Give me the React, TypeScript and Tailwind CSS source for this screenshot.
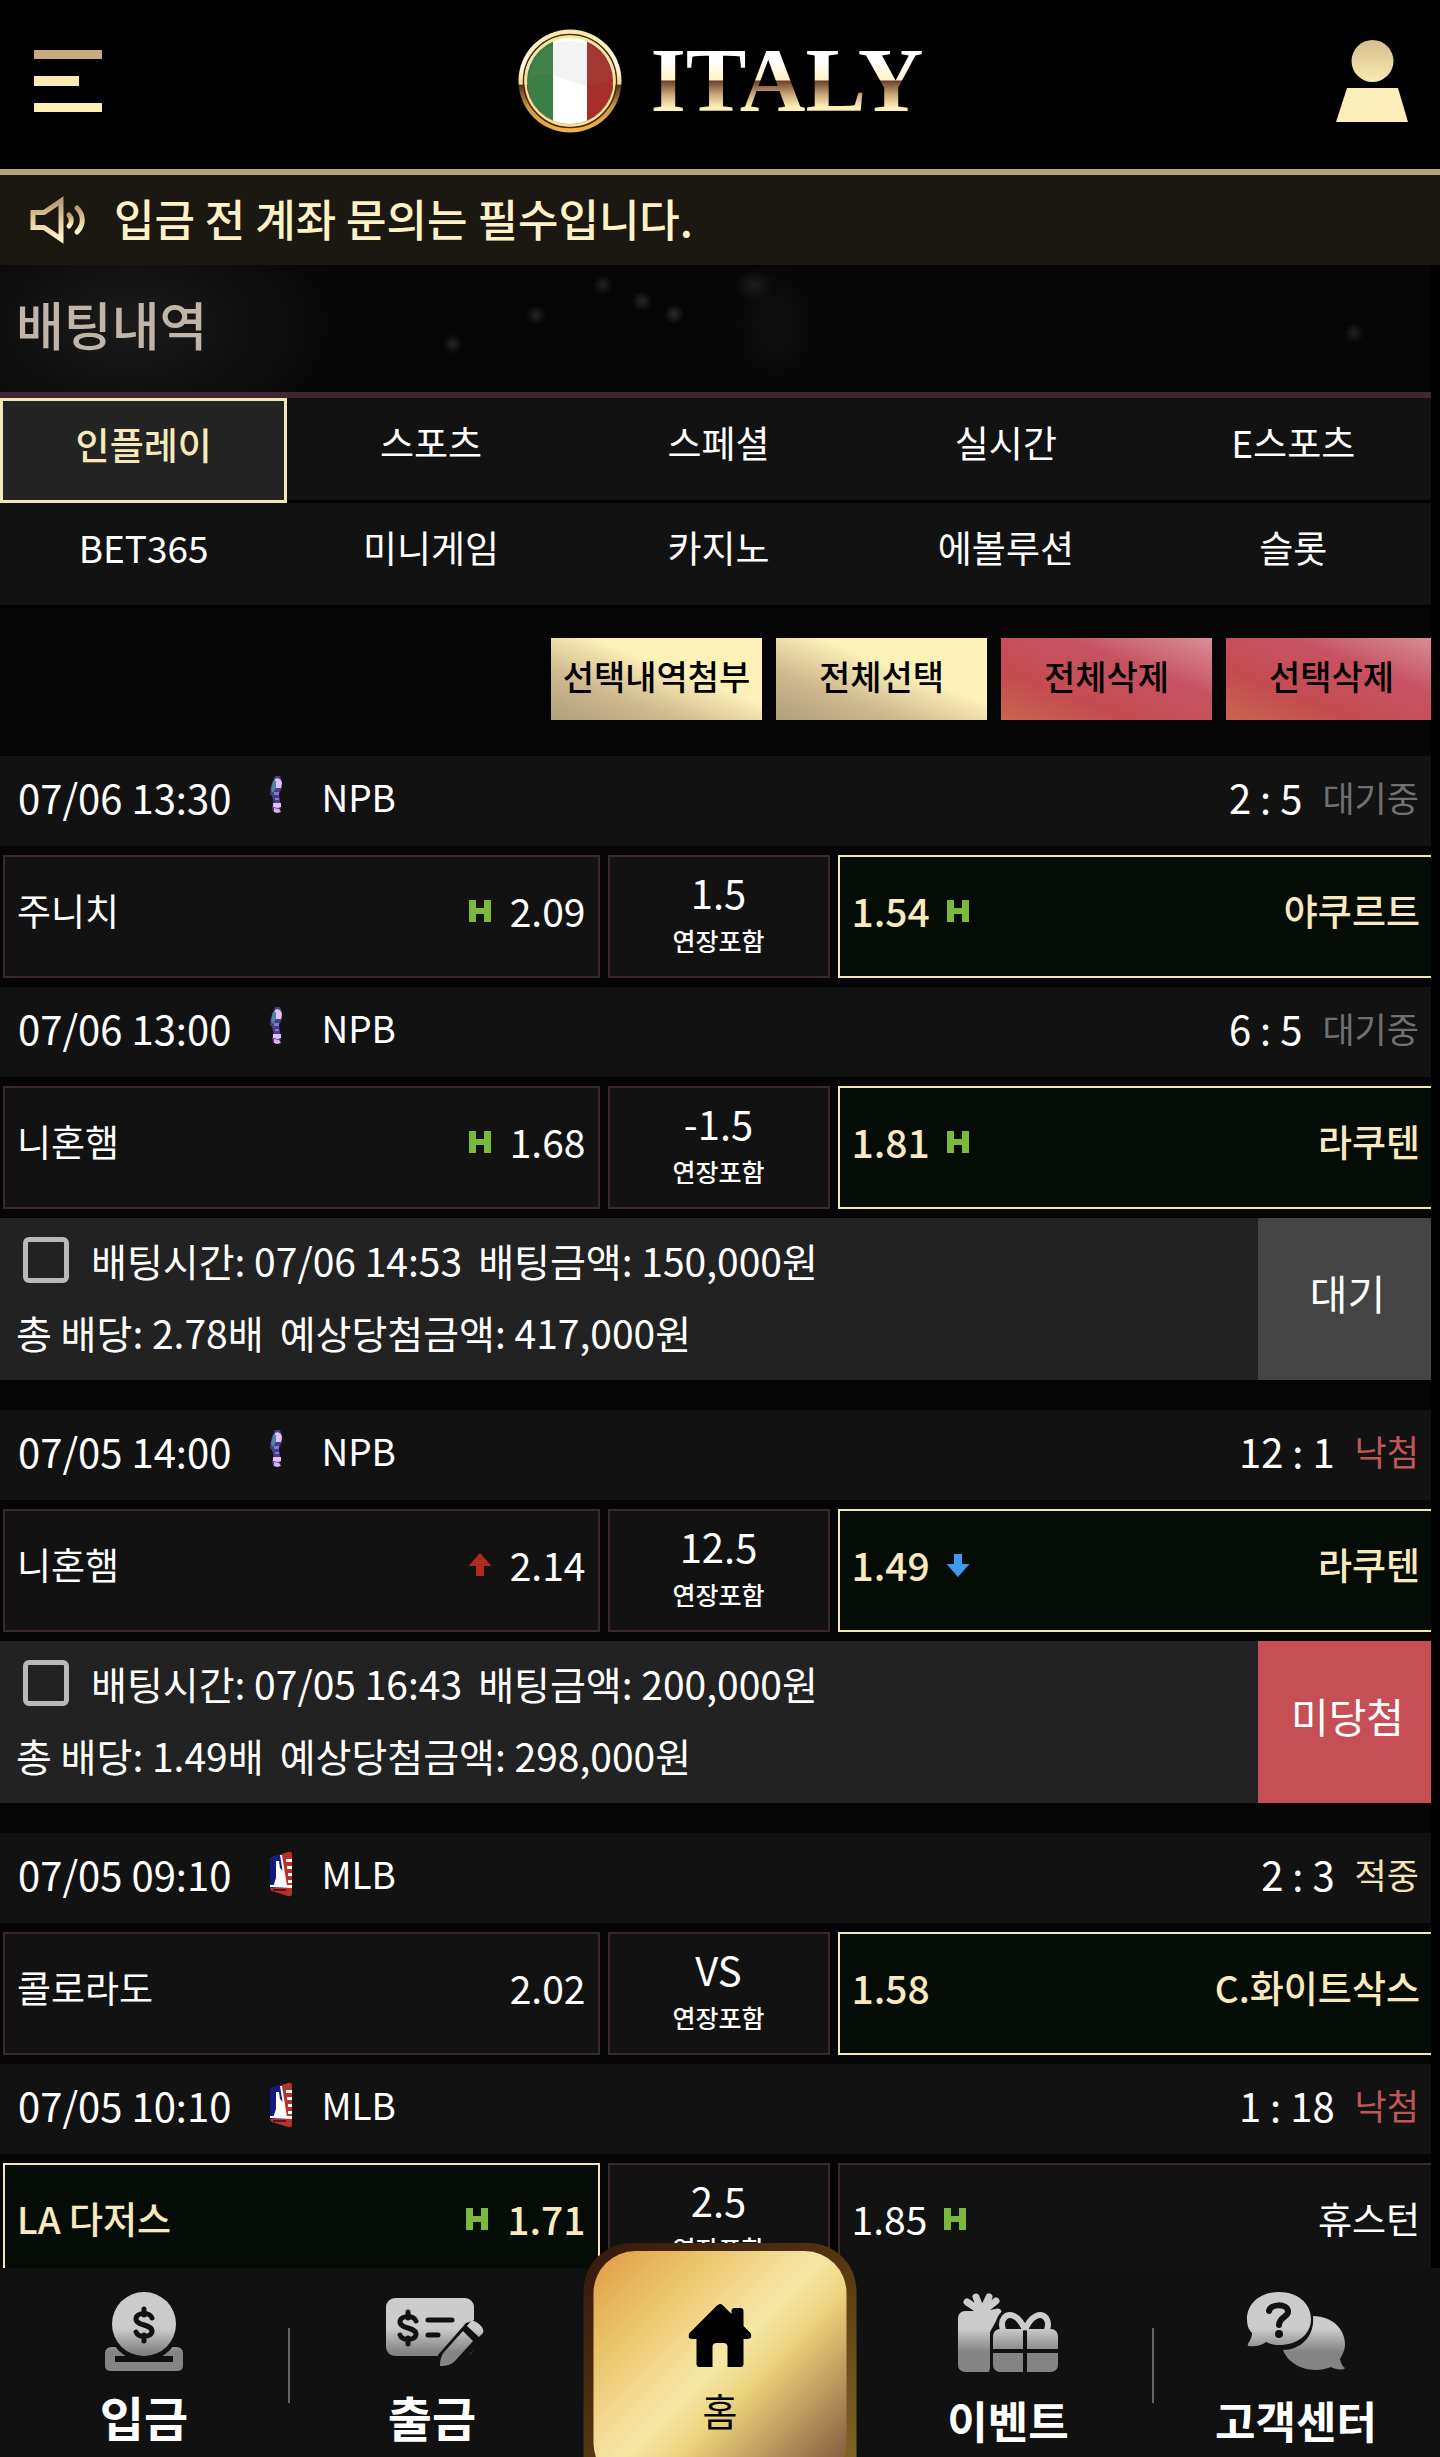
import { ReactNode } from 'react';
import clsx from 'clsx';

type Move = 'H' | 'up' | 'down' | null;
type Status = 'wait' | 'lose' | 'win';

interface Match {
    id: number;
    time: string;
    league: 'NPB' | 'MLB';
    score: string;
    status: Status;
    home: string;
    homeOdds: string;
    homeMove: Move;
    line: string;
    away: string;
    awayOdds: string;
    awayMove: Move;
    pick: 'home' | 'away';
}

interface Bet {
    id: number;
    matches: Match[];
    summary?: {
        time: string;
        amount: string;
        odds: string;
        expected: string;
        result: string;
        lost: boolean;
    };
}

const TABS = ['인플레이', '스포츠', '스페셜', '실시간', 'E스포츠', 'BET365', '미니게임', '카지노', '에볼루션', '슬롯'];

const ACTIONS = [
    { label: '선택내역첨부', danger: false },
    { label: '전체선택', danger: false },
    { label: '전체삭제', danger: true },
    { label: '선택삭제', danger: true },
];

const STATUS: Record<Status, { label: string; color: string }> = {
    wait: { label: '대기중', color: 'text-[#707070]' },
    lose: { label: '낙첨', color: 'text-[#c0565a]' },
    win: { label: '적중', color: 'text-[#f5e3b4]' },
};

const BETS: Bet[] = [
    {
        id: 1,
        matches: [
            { id: 11, time: '07/06 13:30', league: 'NPB', score: '2 : 5', status: 'wait', home: '주니치', homeOdds: '2.09', homeMove: 'H', line: '1.5', away: '야쿠르트', awayOdds: '1.54', awayMove: 'H', pick: 'away' },
            { id: 12, time: '07/06 13:00', league: 'NPB', score: '6 : 5', status: 'wait', home: '니혼햄', homeOdds: '1.68', homeMove: 'H', line: '-1.5', away: '라쿠텐', awayOdds: '1.81', awayMove: 'H', pick: 'away' },
        ],
        summary: { time: '07/06 14:53', amount: '150,000원', odds: '2.78배', expected: '417,000원', result: '대기', lost: false },
    },
    {
        id: 2,
        matches: [
            { id: 21, time: '07/05 14:00', league: 'NPB', score: '12 : 1', status: 'lose', home: '니혼햄', homeOdds: '2.14', homeMove: 'up', line: '12.5', away: '라쿠텐', awayOdds: '1.49', awayMove: 'down', pick: 'away' },
        ],
        summary: { time: '07/05 16:43', amount: '200,000원', odds: '1.49배', expected: '298,000원', result: '미당첨', lost: true },
    },
    {
        id: 3,
        matches: [
            { id: 31, time: '07/05 09:10', league: 'MLB', score: '2 : 3', status: 'win', home: '콜로라도', homeOdds: '2.02', homeMove: null, line: 'VS', away: 'C.화이트삭스', awayOdds: '1.58', awayMove: null, pick: 'away' },
            { id: 32, time: '07/05 10:10', league: 'MLB', score: '1 : 18', status: 'lose', home: 'LA 다저스', homeOdds: '1.71', homeMove: 'H', line: '2.5', away: '휴스턴', awayOdds: '1.85', awayMove: 'H', pick: 'home' },
        ],
    },
];

function FlagLogo() {
    return (
        <svg viewBox="0 0 104 104" className="size-[104px]">
            <defs>
                <linearGradient id="ring" x1="0" y1="0" x2="0" y2="1">
                    <stop offset="0" stopColor="#fbe9a4" />
                    <stop offset="0.35" stopColor="#fffbe6" />
                    <stop offset="0.53" stopColor="#f3d98a" />
                    <stop offset="0.54" stopColor="#5c3317" />
                    <stop offset="0.75" stopColor="#c99745" />
                    <stop offset="1" stopColor="#f4b548" />
                </linearGradient>
                <clipPath id="flag">
                    <circle cx="52" cy="52" r="43" />
                </clipPath>
            </defs>
            <circle cx="52" cy="52" r="51.5" fill="url(#ring)" />
            <circle cx="52" cy="52" r="46.5" fill="none" stroke="#4a2a12" strokeWidth="1.5" />
            <circle cx="52" cy="52" r="44.5" fill="none" stroke="#fbe2a0" strokeWidth="2" />
            <g clipPath="url(#flag)">
                <path d="M8 8h27v88H8z" fill="#3a7f46" />
                <path d="M35 8h34v88H35z" fill="#ffffff" />
                <path d="M69 8h28v88H69z" fill="#a62e2b" />
                <path d="M12 52C20 40 38 46 52 52c14 6 28 6 42-2C92 26 74 12 52 12S12 30 12 52z" fill="#888" opacity="0.1" />
            </g>
        </svg>
    );
}

function SpeakerIcon() {
    return (
        <svg viewBox="0 0 56 48" className="h-12 w-14">
            <defs>
                <linearGradient id="speaker" x1="0" y1="0" x2="0" y2="1">
                    <stop offset="0" stopColor="#b99b78" />
                    <stop offset="0.55" stopColor="#e6d09c" />
                    <stop offset="1" stopColor="#fff6cc" />
                </linearGradient>
            </defs>
            <g fill="none" stroke="url(#speaker)" strokeWidth="5">
                <path d="M3 16.500h11L31 5v38L14 31.500H3z" />
                <path d="M39 19c3 3 3 8 0 11" strokeLinecap="round" />
                <path d="M47 12c7 7 7 17 0 24" strokeLinecap="round" />
            </g>
        </svg>
    );
}

function MoveIcon({ move }: { move: Move }) {
    if (!move) return null;
    return (
        <svg viewBox="0 0 24 24" className="size-6 shrink-0">
            {move === 'H' && <path d="M1 1h7v8h8V1h7v22h-7v-8H8v8H1z" fill="#7ab93c" />}
            {move === 'up' && <path d="M12 0 23.500 13H16v10H8V13H.5z" fill="#b22a1e" />}
            {move === 'down' && <path d="M12 24 23.500 11H16V1H8v10H.5z" fill="#3d9bf2" />}
        </svg>
    );
}

function LeagueIcon({ league }: { league: Match['league'] }) {
    if (league === 'NPB') {
        return (
            <svg viewBox="0 0 24 46" className="h-[46px] w-6">
                <path d="M6 2h5l2 5v7l-3 6 1 8 1 3-1 7H4l-1-5 2-3-2-8-2-2 1-8 2-5z" fill="#473d86" />
                <path d="M6 5c3-2 6 0 7 4l-1 5H7L5 9z" fill="#e6bff2" />
                <path d="M4 7h3v7l-3 5-2-3 1-4z" fill="#4f86a6" />
                <path d="M5 18h5v3H5zM6 24h4v2H6z" fill="#8678d8" />
                <path d="M4 29h8v4l-3 1-5-1z" fill="#e6bff2" />
                <path d="M5 34l5 1 2 3-4 1-3-1z" fill="#dcb0ee" />
            </svg>
        );
    }
    return (
        <svg viewBox="0 0 24 46" className="h-[46px] w-6">
            <path d="M3 6 19 1q4-1 4 3v38q0 4-4 3L3 40q-2-1-2-4V10q0-3 2-4z" fill="#b8322c" />
            <path d="M1 9q0-2 2-3l10-3 4 34H1z" fill="#101a82" />
            <path d="M11 4h2l5 31h-2z" fill="#fff" />
            <path d="M17 8h6v3h-6zM18 15h5v3h-5zM19 22h4v3h-4zM19 29h4v3h-4z" fill="#fff" />
            <path d="M7 10h3l1 7 3 3 2 5v11H4l3-9z" fill="#fff" />
            <path d="M1 34h22v3L1 36z" fill="#fff" />
            <path d="M4 38h13v2H4z" fill="#5c1512" />
        </svg>
    );
}

function NavGradient({ id }: { id: string }) {
    return (
        <linearGradient id={id} x1="0" y1="0" x2="0" y2="80" gradientUnits="userSpaceOnUse">
            <stop offset="0.45" stopColor="#cccccc" />
            <stop offset="0.75" stopColor="#848484" />
        </linearGradient>
    );
}

function Dollar({ x, y }: { x: number; y: number }) {
    return (
        <path
            transform={`translate(${x} ${y})`}
            d="M8-7C6-13-8-13-8-6S8-1 8 6 -6 13-8 7M0-16v6M0 10v6"
            fill="none"
            stroke="#111"
            strokeWidth="5"
            strokeLinecap="round"
        />
    );
}

function DepositIcon() {
    return (
        <svg viewBox="0 0 78 80" className="h-20 w-[78px]">
            <defs><NavGradient id="deposit" /></defs>
            <path d="M6 55h66a6 6 0 0 1 6 6v13a5 5 0 0 1-5 5H5a5 5 0 0 1-5-5V61a6 6 0 0 1 6-6z" fill="url(#deposit)" />
            <circle cx="39" cy="33" r="36" fill="#111" />
            <circle cx="39" cy="32" r="32" fill="url(#deposit)" />
            <path d="M10 67h58" stroke="#111" strokeWidth="6" />
            <Dollar x={39} y={33} />
        </svg>
    );
}

function WithdrawIcon() {
    return (
        <svg viewBox="-3 0 98 80" className="h-20 w-[98px] overflow-visible">
            <defs><NavGradient id="withdraw" /></defs>
            <rect y="6" width="88" height="58" rx="9" fill="url(#withdraw)" />
            <Dollar x={22} y={36} />
            <path d="M42 28h24M42 43h10" stroke="#111" strokeWidth="5" strokeLinecap="round" />
            <path d="M52 80V63l28-32 12-4 10 16-30 32z" fill="#111" />
            <path d="m77 39 10 10-18 20c-4 4-9 5-15 5 0-5 1-11 5-15zM81 34l3-4c4-4 16 6 13 11l-4 4z" fill="url(#withdraw)" />
        </svg>
    );
}

function EventIcon() {
    return (
        <svg viewBox="0 0 100 80" className="h-20 w-[100px]">
            <defs><NavGradient id="event" /></defs>
            <path d="M7 19h31l4 3-9 16v34l-2 8H7a7 7 0 0 1-7-7V26a7 7 0 0 1 7-7z" fill="url(#event)" />
            <path d="M24 20 9 10M24 20 18 5M24 20l7-15M24 20 38 9M27 23l13-3" stroke="#cccccc" strokeWidth="7" strokeLinecap="round" />
            <path d="M38 32h62v48H32V40z" fill="#111" />
            <path d="M67 38C61 23 51 20 46 26c-3 4-2 9-1 12M67 38c6-15 16-18 21-12 3 4 2 9 1 12" fill="none" stroke="#111" strokeWidth="12" />
            <path d="M67 38C61 23 51 20 46 26c-3 4-2 9-1 12M67 38c6-15 16-18 21-12 3 4 2 9 1 12" fill="none" stroke="url(#event)" strokeWidth="6" />
            <path d="M42 37h23v20H35V44a7 7 0 0 1 7-7zM69 37h24a7 7 0 0 1 7 7v13H69zM35 61h30v19H42a7 7 0 0 1-7-7zM69 61h31v12a7 7 0 0 1-7 7H69z" fill="url(#event)" />
        </svg>
    );
}

function SupportIcon() {
    return (
        <svg viewBox="0 0 98 80" className="h-20 w-[98px]">
            <defs><NavGradient id="support" /></defs>
            <path d="M66 24c20 0 32 14 32 28 0 7-3 11-5 15 1 5 3 8 5 9-2 3-11 1-14-1-20 8-42-1-48-17 18 0 32-14 30-34z" fill="url(#support)" />
            <path d="M32 0c18 0 32 11 32 27S50 53 32 53c-5 0-9-1-13-3-5 4-12 5-17 4-4-1 3-5 3-13C1 37 0 32 0 27 0 11 14 0 32 0z" fill="url(#support)" />
            <path d="M22 19c1-7 18-8 19 0 1 6-9 6-9 14" fill="none" stroke="#111" strokeWidth="6" strokeLinecap="round" />
            <circle cx="32" cy="42" r="4" fill="#111" />
        </svg>
    );
}

function Header() {
    return (
        <header className="flex h-[175px] shrink-0 items-center justify-between border-b-[6px] border-[#b3a57c] bg-black pr-8 pb-2 pl-[34px]">
            <button aria-label="메뉴" className="flex w-[72px] flex-col gap-[17px]">
                <span className="h-[9px] w-[68px] bg-[#c8ab80]" />
                <span className="h-[10px] w-[45px] bg-[#fbeab2]" />
                <span className="h-[9px] w-[68px] bg-[#fdeeb6]" />
            </button>
            <a href="#" className="flex items-center gap-7">
                <FlagLogo />
                <span className="bg-[linear-gradient(to_bottom,#ffffff_30%,#fff3c4_49%,#6e3f2c_50%,#c9a878_63%,#fdf0b8_75%)] bg-clip-text font-['Liberation_Serif',serif] text-[91px] leading-[104px] font-bold text-transparent">
                    ITALY
                </span>
            </a>
            <button aria-label="내 정보">
                <svg viewBox="0 0 72 84" className="h-[84px] w-[72px]">
                    <defs>
                        <linearGradient id="user" x1="0" y1="0" x2="0" y2="1">
                            <stop offset="0" stopColor="#d6bd8e" />
                            <stop offset="1" stopColor="#fbeab0" />
                        </linearGradient>
                    </defs>
                    <circle cx="36.500" cy="22" r="21" fill="url(#user)" />
                    <path d="M11 49h51l10 34H0z" fill="#fcedb9" />
                </svg>
            </button>
        </header>
    );
}

function Cell({ picked, children, className }: { picked?: boolean; children: ReactNode; className?: string }) {
    return (
        <div
            className={clsx(
                'flex border-2 px-3',
                picked
                    ? 'border-[#f3e6b8] bg-[#050c05] font-medium text-[#f8e9bf]'
                    : 'border-[#3a282f] bg-[#121212] text-white',
                className
            )}
        >
            {children}
        </div>
    );
}

function MatchRow({ match }: { match: Match }) {
    const status = STATUS[match.status];
    return (
        <div>
            <div className="flex h-[90px] items-center bg-[#121212] pr-[18px] pb-2 pl-[18px] text-[40px] text-white">
                <span>{match.time}</span>
                <span className="mr-7 ml-[38px]">
                    <LeagueIcon league={match.league} />
                </span>
                <span className="text-[37px]">{match.league}</span>
                <span className="ml-auto">{match.score}</span>
                <span className={clsx('ml-5 text-[35px]', status.color)}>{status.label}</span>
            </div>
            <div className="my-[9px] grid h-[123px] grid-cols-[1fr_222px_1fr] gap-2 px-[3px] text-[37px]">
                <Cell picked={match.pick === 'home'} className="items-center justify-between pb-3">
                    <span>{match.home}</span>
                    <span className="flex items-center gap-[18px] text-[39px]">
                        <MoveIcon move={match.homeMove} />
                        {match.homeOdds}
                    </span>
                </Cell>
                <Cell className="flex-col items-center justify-center pb-1">
                    <span className="text-[40px] leading-[50px]">{match.line}</span>
                    <span className="text-[25px] leading-[46px] font-medium">연장포함</span>
                </Cell>
                <Cell picked={match.pick === 'away'} className="items-center justify-between pb-3">
                    <span className="flex items-center gap-4 text-[39px]">
                        {match.awayOdds}
                        <MoveIcon move={match.awayMove} />
                    </span>
                    <span>{match.away}</span>
                </Cell>
            </div>
        </div>
    );
}

function BetSummary({ summary }: { summary: NonNullable<Bet['summary']> }) {
    return (
        <div className="flex h-[162px] bg-[#222222] text-[39px] text-white">
            <div className="flex flex-1 flex-col pt-[6px] pl-4">
                <label className="flex h-[72px] items-center">
                    <input
                        type="checkbox"
                        className="mr-[22px] ml-[7px] size-[46px] appearance-none rounded-md border-[5px] border-[#b9b9b9] checked:bg-[#b9b9b9]"
                    />
                    <span className="mr-4">배팅시간: {summary.time}</span>
                    <span>배팅금액: {summary.amount}</span>
                </label>
                <p className="flex h-[72px] items-center">
                    <span className="mr-4">총 배당: {summary.odds}</span>
                    <span>예상당첨금액: {summary.expected}</span>
                </p>
            </div>
            <div
                className={clsx(
                    'flex w-[179px] items-center justify-center pb-3 text-[41px]',
                    summary.lost ? 'bg-[#c54f55]' : 'bg-[#444444]'
                )}
            >
                {summary.result}
            </div>
        </div>
    );
}

function NavItem({ icon, label, className }: { icon: ReactNode; label: string; className: string }) {
    return (
        <a href="#" className="flex h-full flex-col items-center pt-6 text-white">
            {icon}
            <span className={clsx('font-bold', className)}>{label}</span>
        </a>
    );
}

function BottomNav() {
    return (
        <nav className="relative grid h-[189px] shrink-0 grid-cols-5 bg-[#111111]">
            <NavItem icon={<DepositIcon />} label="입금" className="text-[48px] leading-[88px]" />
            <div className="relative">
                <span className="absolute top-[60px] left-0 h-[75px] w-[2px] bg-[#666666]" />
                <NavItem icon={<WithdrawIcon />} label="출금" className="text-[48px] leading-[88px]" />
            </div>
            <div className="relative">
                <a
                    href="#"
                    className="absolute -top-[25px] left-1/2 h-[214px] w-[273px] -translate-x-1/2 overflow-hidden rounded-t-[48px] bg-[linear-gradient(to_bottom_right,#34180c,#543511_50%,#806424)] px-[10px] pt-2"
                >
                    <span className="flex h-[234px] flex-col items-center rounded-[42px] bg-[linear-gradient(135deg,#e09b41,#eac36a_22%,#f5e8a6_48%,#ecd27c_60%,#8a6644_92%)] pt-[53px] text-black">
                        <svg viewBox="0 0 63 63" className="size-[63px]">
                            <path
                                d="M28 2q4-4 7 0l8 8V7q0-3 3-3h6q3 0 3 3v15l7 7q3 6-4 6h-3v25q0 3-3 3H39V43q0-4-4-4h-7q-4 0-4 4v20H11q-3 0-3-3V35H4q-6 0-3-6z"
                                fill="currentColor"
                            />
                        </svg>
                        <span className="mt-4 text-[38px] leading-[54px]">홈</span>
                    </span>
                </a>
            </div>
            <NavItem icon={<EventIcon />} label="이벤트" className="text-[44px] leading-[96px]" />
            <div className="relative">
                <span className="absolute top-[60px] left-0 h-[75px] w-[2px] bg-[#666666]" />
                <NavItem icon={<SupportIcon />} label="고객센터" className="text-[44px] leading-[96px]" />
            </div>
        </nav>
    );
}

export default function App() {
    return (
        <div className="flex h-screen flex-col bg-black font-['Noto_Sans_CJK_KR',sans-serif]">
            <Header />
            <div className="flex h-[90px] shrink-0 items-center gap-7 bg-[#1b1811] pl-[30px] text-[44px] font-medium text-[#fdf1c6]">
                <SpeakerIcon />
                <p className="pb-1">입금 전 계좌 문의는 필수입니다.</p>
            </div>

            <main className="mr-[9px] min-h-0 flex-1 overflow-hidden bg-[#050505] bg-[radial-gradient(ellipse_230px_140px_at_130px_60px,#1b1b1b,transparent),radial-gradient(ellipse_20px_16px_at_754px_20px,#1c1c1c,transparent),radial-gradient(ellipse_50px_70px_at_775px_60px,#101010,transparent),radial-gradient(circle_10px_at_603px_20px,#222222,transparent),radial-gradient(circle_10px_at_642px_36px,#282828,transparent),radial-gradient(circle_10px_at_674px_49px,#2c2c2c,transparent),radial-gradient(circle_10px_at_536px_50px,#262626,transparent),radial-gradient(circle_10px_at_453px_79px,#262626,transparent),radial-gradient(circle_10px_at_1354px_68px,#222222,transparent)] bg-no-repeat">
                {/* rows run a little wider than the scroll area, so the right edge is cut */}
                <div className="-mr-[6px]">
                    <h1 className="flex h-[127px] items-center pb-[10px] pl-4 text-[52px] font-medium text-[#c0b5a8]">배팅내역</h1>

                    <div className="grid grid-cols-5 border-t-[6px] border-[#3f2630] text-[37px]">
                        {TABS.map((tab, i) => (
                            <button
                                key={tab}
                                className={clsx(
                                    'h-[105px] pb-3',
                                    i === 0
                                        ? 'border-[3px] border-[#f3e6bb] bg-[#242424] font-medium text-[#f8e9bc]'
                                        : 'border-b-[3px] border-black bg-[#121212] text-white'
                                )}
                            >
                                {tab}
                            </button>
                        ))}
                    </div>

                    <div className="flex justify-end gap-[14px] pt-[30px] pb-9">
                        {ACTIONS.map(action => (
                            <button
                                key={action.label}
                                className={clsx(
                                    'h-[82px] w-[211px] pb-2 text-[34px] font-medium whitespace-nowrap text-black',
                                    action.danger
                                        ? 'bg-[linear-gradient(to_top_right,#c9664f,#c44c50_30%,#c75362_65%,#d98f99)]'
                                        : 'bg-[linear-gradient(to_top_right,#ada07c,#cfb98e_30%,#fdf0b8_60%)]'
                                )}
                            >
                                {action.label}
                            </button>
                        ))}
                    </div>

                    <div className="flex flex-col gap-[30px]">
                        {BETS.map(bet => (
                            <section key={bet.id}>
                                {bet.matches.map(match => (
                                    <MatchRow key={match.id} match={match} />
                                ))}
                                {bet.summary && <BetSummary summary={bet.summary} />}
                            </section>
                        ))}
                    </div>
                </div>
            </main>

            <BottomNav />
        </div>
    );
}
